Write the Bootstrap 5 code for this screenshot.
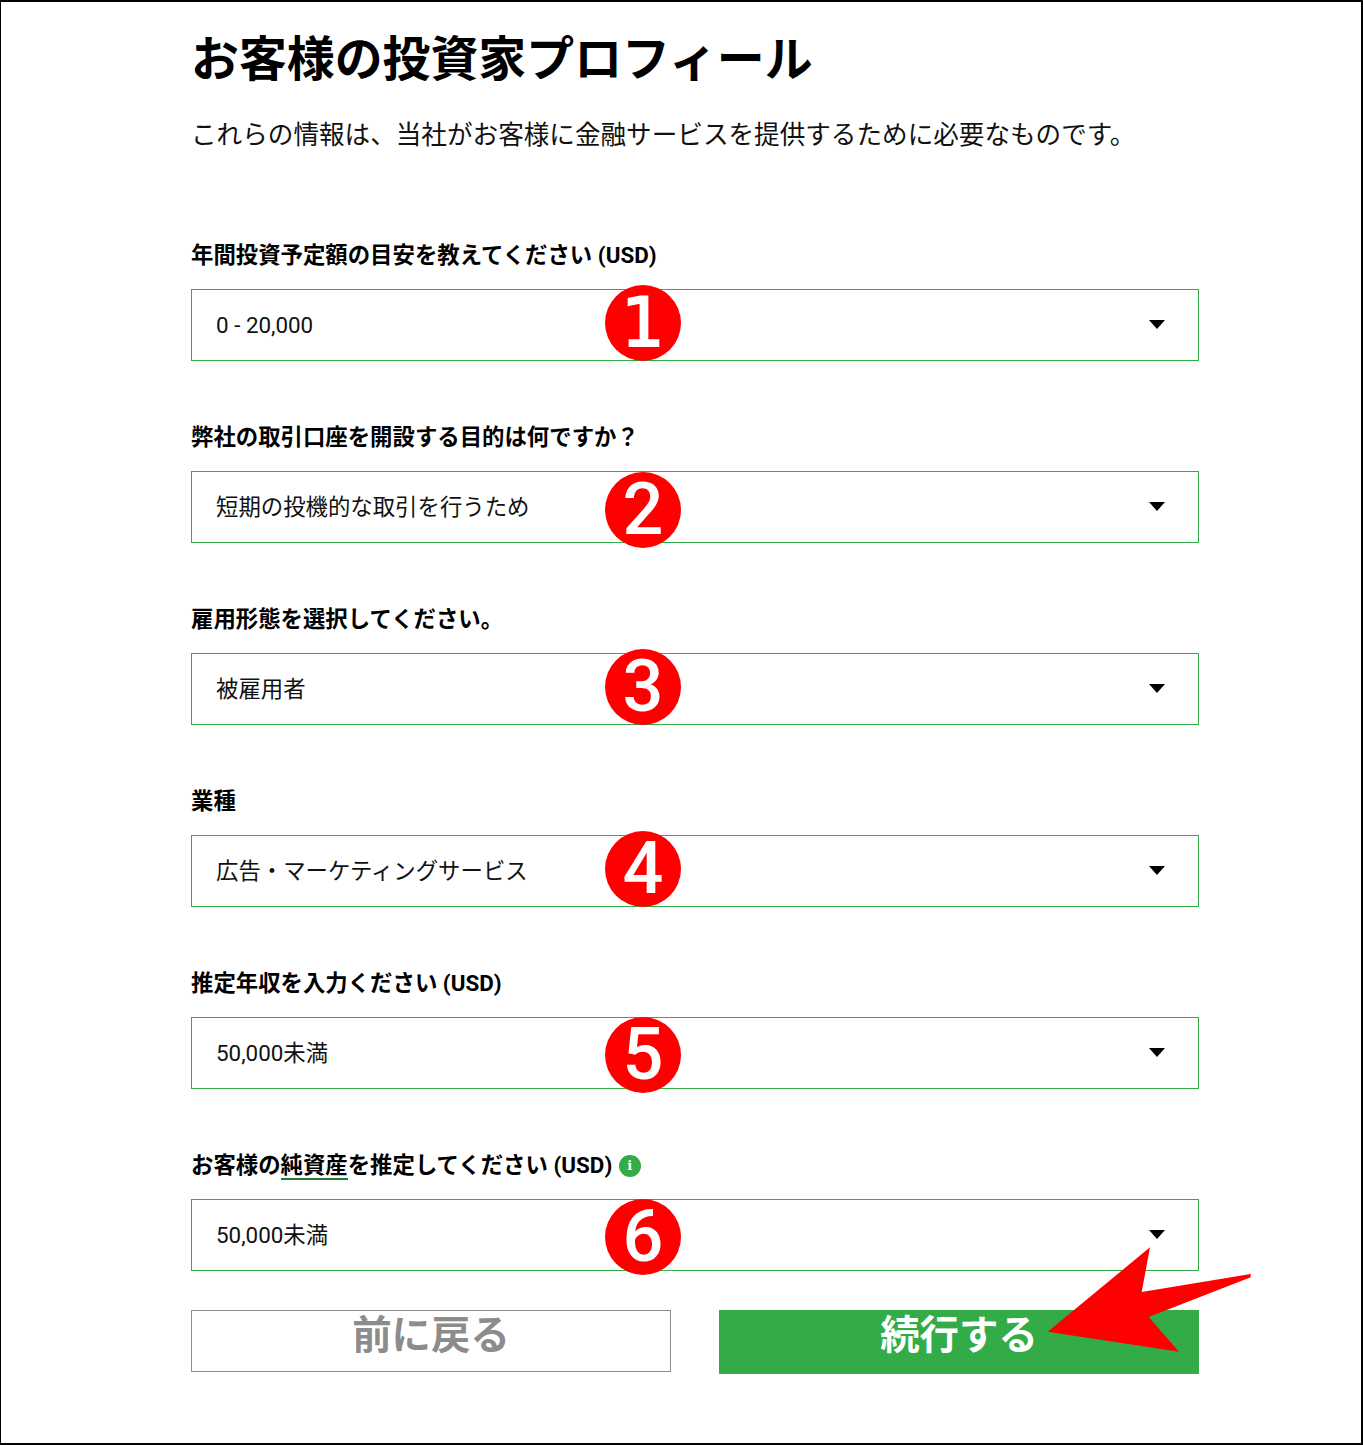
<!DOCTYPE html>
<html lang="ja">
<head>
  <meta charset="UTF-8">
  <title>お客様の投資家プロフィール</title>
  <link rel="stylesheet" href="https://cdn.jsdelivr.net/npm/bootstrap@5.3.0/dist/css/bootstrap.min.css">
  <style>
    html, body { height: 100%; }
    body { background: #fff; color: #000; font-family: Roboto, "Noto Sans CJK JP", sans-serif; }
    .page-frame { position: relative; height: 1445px; border: 2px solid #000; border-left-width: 1px; padding: 0 162px 0 190px; overflow: hidden; }
    .page-title { font-size: 47.9px; font-weight: 700; line-height: 60px; margin: 28px 0 0 0; color: #000; }
    .page-sub { font-size: 25.6px; line-height: 38px; margin: 26px 0 84px 0; color: #111; }
    .field-box { position: relative; margin-bottom: 59px; }
    .field-box-last { margin-bottom: 39px; }
    .field-label { display: block; font-size: 22.4px; font-weight: 700; line-height: 35px; margin-bottom: 16px; color: #000; white-space: nowrap; }
    .field-select { height: 72px; font-size: 22.4px; padding: 1px 60px 0 24px; border: 1px solid #33ab47; border-radius: 0; color: #111; background-image: none; font-family: inherit; }
    .field-caret { position: absolute; right: 34px; bottom: 32px; width: 0; height: 0; border-left: 8px solid transparent; border-right: 8px solid transparent; border-top: 9px solid #000; pointer-events: none; }
    .step-pin { position: absolute; left: 414px; width: 76px; height: 76px; border-radius: 50%; background: #f00; color: #fff; font-family: Roboto, sans-serif; font-weight: 500; font-size: 72px; line-height: 76px; text-align: center; }
    .step-pin-one { font-family: "DejaVu Sans", sans-serif; font-weight: 400; font-size: 68px; -webkit-text-stroke: 2px #fff; }
    .hint-word { border-bottom: 2px solid #1e7a34; }
    .info-dot { display: inline-block; width: 22px; height: 22px; margin-left: 1px; border-radius: 50%; background: #33ab47; color: #fff; font-family: "DejaVu Serif", serif; font-size: 13px; line-height: 22px; text-align: center; vertical-align: 3px; }
    .nav-btn { width: 480px; border-radius: 0; font-size: 39.4px; font-weight: 700; line-height: 50px; }
    .nav-back { height: 62px; padding: 0 0 14px; border: 1px solid #8c8c8c; color: #8c8c8c; background: #fff; }
    .nav-next { height: 64px; padding: 0 0 12px; border: 0; color: #fff; background: #33ab47; }
    .red-arrow { position: absolute; left: -1px; top: -2px; pointer-events: none; }
  </style>
</head>
<body>
  <div class="page-frame">
    <h1 class="page-title">お客様の投資家プロフィール</h1>
    <p class="page-sub">これらの情報は、当社がお客様に金融サービスを提供するために必要なものです。</p>

    <form>
      <div class="field-box">
        <label class="field-label">年間投資予定額の目安を教えてください (USD)</label>
        <select class="form-select field-select"><option>0 - 20,000</option></select>
        <span class="field-caret"></span>
        <span class="step-pin step-pin-one" style="top: 47px">1</span>
      </div>
      <div class="field-box">
        <label class="field-label">弊社の取引口座を開設する目的は何ですか？</label>
        <select class="form-select field-select"><option>短期の投機的な取引を行うため</option></select>
        <span class="field-caret"></span>
        <span class="step-pin" style="top: 52px">2</span>
      </div>
      <div class="field-box">
        <label class="field-label">雇用形態を選択してください。</label>
        <select class="form-select field-select"><option>被雇用者</option></select>
        <span class="field-caret"></span>
        <span class="step-pin" style="top: 47px">3</span>
      </div>
      <div class="field-box">
        <label class="field-label">業種</label>
        <select class="form-select field-select"><option>広告・マーケティングサービス</option></select>
        <span class="field-caret"></span>
        <span class="step-pin" style="top: 47px">4</span>
      </div>
      <div class="field-box">
        <label class="field-label">推定年収を入力ください (USD)</label>
        <select class="form-select field-select"><option>50,000未満</option></select>
        <span class="field-caret"></span>
        <span class="step-pin" style="top: 51px">5</span>
      </div>
      <div class="field-box field-box-last">
        <label class="field-label">お客様の<span class="hint-word">純資産</span>を推定してください (USD) <span class="info-dot">i</span></label>
        <select class="form-select field-select"><option>50,000未満</option></select>
        <span class="field-caret"></span>
        <span class="step-pin" style="top: 51px">6</span>
      </div>

      <div class="d-flex align-items-start justify-content-between">
        <button type="button" class="btn nav-btn nav-back">前に戻る</button>
        <button type="button" class="btn nav-btn nav-next">続行する</button>
      </div>
    </form>

    <svg class="red-arrow" width="1363" height="1445" viewBox="0 0 1363 1445">
      <polygon fill="#f00" points="1047.7,1331.7 1150,1247.3 1141.7,1292 1250.7,1274 1250.7,1277.3 1148.7,1317 1179,1351.7"/>
    </svg>
  </div>
  <script src="https://cdn.jsdelivr.net/npm/bootstrap@5.3.0/dist/js/bootstrap.bundle.min.js"></script>
</body>
</html>
